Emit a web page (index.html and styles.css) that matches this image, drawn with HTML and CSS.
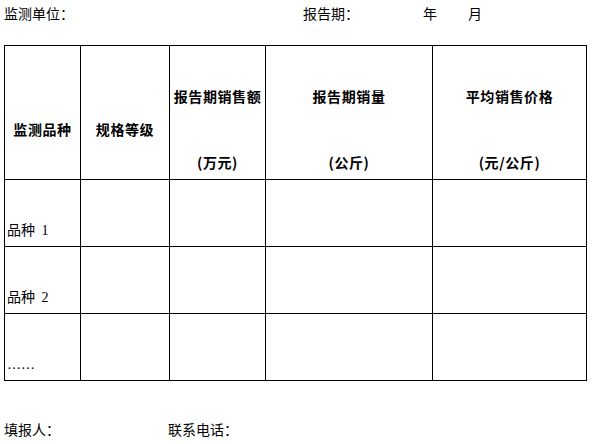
FILE: index.html
```html
<!DOCTYPE html>
<html lang="zh">
<head>
<meta charset="utf-8">
<link rel="stylesheet" href="styles.css">
</head>
<body>
<div class="page">
  <div class="topline">
    <span class="unit">监测单位：</span>
    <span class="period">报告期：</span>
    <span class="year">年</span>
    <span class="month">月</span>
  </div>
  <table class="report">
    <colgroup>
      <col class="c1"><col class="c2"><col class="c3"><col class="c4"><col class="c5">
    </colgroup>
    <thead>
      <tr>
        <th>监测品种</th>
        <th>规格等级</th>
        <th>报告期销售额<br><br>(万元)</th>
        <th>报告期销量<br><br>(公斤)</th>
        <th>平均销售价格<br><br>(元/公斤)</th>
      </tr>
    </thead>
    <tbody>
      <tr><td>品种 1</td><td></td><td></td><td></td><td></td></tr>
      <tr><td>品种 2</td><td></td><td></td><td></td><td></td></tr>
      <tr><td>……</td><td></td><td></td><td></td><td></td></tr>
    </tbody>
  </table>
  <div class="footer">
    <span class="filler">填报人：</span>
    <span class="phone">联系电话：</span>
  </div>
</div>
</body>
</html>
```

FILE: styles.css
```css
html, body {
  margin: 0;
  padding: 0;
  background: #fff;
}
body {
  font-family: "Liberation Serif", "Noto Sans CJK SC", serif;
  font-size: 14px;
  color: #000;
}
.page {
  width: 592px;
  height: 444px;
  padding: 0 0 0 4px;
  box-sizing: border-box;
}
.topline {
  display: flex;
  height: 30px;
  line-height: 30px;
}
.unit { width: 299px; }
.period { width: 120px; }
.year { width: 45px; }
.report {
  margin-top: 15px;
  border-collapse: collapse;
  table-layout: fixed;
  width: 582px;
}
.c1 { width: 76px; }
.c2 { width: 89px; }
.c3 { width: 96px; }
.c4 { width: 167px; }
.c5 { width: 154px; }
.report th, .report td {
  border: 1px solid #000;
  padding: 0;
}
.report th {
  height: 133px;
  box-sizing: border-box;
  padding-top: 34px;
  vertical-align: middle;
  text-align: center;
  font-family: "Noto Sans CJK SC", sans-serif;
  font-weight: bold;
  font-size: 14px;
  line-height: 33px;
  letter-spacing: 0.6px;
}
.report td {
  height: 67px;
  box-sizing: border-box;
  vertical-align: bottom;
  padding: 0 0 5px 2px;
  line-height: 20px;
  word-spacing: 3px;
}
.footer {
  display: flex;
  margin-top: 40px;
  line-height: 20px;
}
.filler { width: 164px; }
```
